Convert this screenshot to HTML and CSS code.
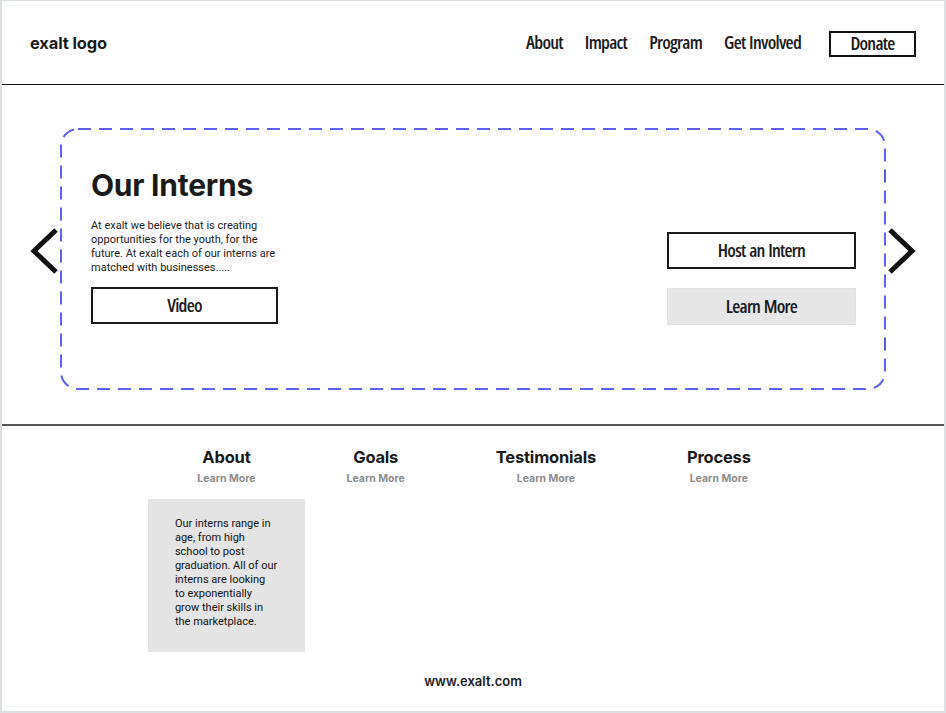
FILE: index.html
```html
<!DOCTYPE html>
<html lang="en">
<head>
<meta charset="utf-8">
<title>exalt</title>
<link rel="stylesheet" href="styles.css">
</head>
<body>
<div class="frame">
  <header class="site-header">
    <div class="logo">exalt logo</div>
    <nav class="nav">
      <a class="nav-link">About</a>
      <a class="nav-link">Impact</a>
      <a class="nav-link">Program</a>
      <a class="nav-link">Get Involved</a>
      <a class="nav-link donate">Donate</a>
    </nav>
  </header>

  <section class="hero">
    <svg class="arrow" width="28" height="46" viewBox="0 0 28 46"><polyline points="26,2 4,23 26,44" fill="none" stroke="#111" stroke-width="5"/></svg>
    <div class="card">
      <svg class="card-border" width="826" height="262" viewBox="0 0 826 262"><rect x="1" y="1" width="824" height="260" rx="17" ry="17" fill="none" stroke="#5f5ff2" stroke-width="2" stroke-dasharray="13 8"/></svg>
      <div class="card-left">
        <h1 class="title">Our Interns</h1>
        <p class="intro">At exalt we believe that is creating opportunities for the youth, for the future. At exalt each of our interns are matched with businesses.....</p>
        <a class="btn">Video</a>
      </div>
      <div class="card-right">
        <a class="btn">Host an Intern</a>
        <a class="btn btn-grey">Learn More</a>
      </div>
    </div>
    <svg class="arrow" width="28" height="46" viewBox="0 0 28 46"><polyline points="2,2 24,23 2,44" fill="none" stroke="#111" stroke-width="5"/></svg>
  </section>

  <footer class="footer">
    <div class="cols">
      <div class="col">
        <h2 class="col-title">About</h2>
        <a class="col-link">Learn More</a>
        <div class="about-box">Our interns range in<br>age, from high<br>school to post<br>graduation. All of our<br>interns are looking<br>to exponentially<br>grow their skills in<br>the marketplace.</div>
      </div>
      <div class="col">
        <h2 class="col-title">Goals</h2>
        <a class="col-link">Learn More</a>
      </div>
      <div class="col">
        <h2 class="col-title">Testimonials</h2>
        <a class="col-link">Learn More</a>
      </div>
      <div class="col">
        <h2 class="col-title">Process</h2>
        <a class="col-link">Learn More</a>
      </div>
    </div>
    <div class="site-url">www.exalt.com</div>
  </footer>
</div>
</body>
</html>
```

FILE: styles.css
```css
* { box-sizing: border-box; }
html, body { margin: 0; padding: 0; background: #fff; }
body {
  font-family: "Inter", "Noto Sans", sans-serif;
  color: #1a1a1a;
}
.frame {
  width: 946px;
  height: 713px;
  border: 2px solid #dadfdf;
  border-top-width: 1px;
  display: flex;
  flex-direction: column;
  overflow: hidden;
}
.site-header {
  height: 84px;
  flex: none;
  border-bottom: 1px solid #111;
  display: flex;
  align-items: center;
  justify-content: space-between;
  padding: 0 28px 0 28px;
}
.logo {
  font-size: 16.5px;
  font-weight: 700;
  letter-spacing: -0.15px;
}
.nav {
  display: flex;
  align-items: center;
  gap: 22px;
}
.nav-link, .btn {
  font-family: "Open Sans", sans-serif;
  font-stretch: 75%;
  font-weight: 600;
  font-size: 18.5px;
  letter-spacing: -0.75px;
  word-spacing: 1px;
  color: #1a1a1a;
}
.nav-link {
  line-height: 27px;
  padding-bottom: 3px;
}
.donate {
  width: 87px;
  height: 26px;
  border: 2px solid #111;
  display: flex;
  align-items: center;
  justify-content: center;
  margin-left: 6px;
  margin-top: 2px;
  padding-bottom: 2px;
}
.hero {
  height: 341px;
  flex: none;
  border-bottom: 2px solid #555;
  display: flex;
  align-items: flex-start;
  padding: 43px 0 0 28px;
  gap: 2px;
}
.arrow {
  margin-top: 100px;
  flex: none;
}
.card {
  position: relative;
  width: 826px;
  height: 262px;
  flex: none;
  display: flex;
  justify-content: space-between;
  align-items: flex-start;
  padding: 0 30px 0 31px;
}
.card-border {
  position: absolute;
  left: 0;
  top: 0;
  pointer-events: none;
}
.card-left {
  width: 187px;
  padding-top: 39px;
}
.title {
  margin: 0;
  font-size: 30px;
  font-weight: 700;
  line-height: 36px;
  letter-spacing: -0.25px;
  white-space: nowrap;
}
.intro {
  margin: 16px 0 12px;
  font-family: "Roboto", sans-serif;
  font-size: 11px;
  line-height: 14px;
  width: 190px;
}
.btn {
  display: flex;
  align-items: center;
  justify-content: center;
  width: 187px;
  height: 37px;
  border: 2px solid #1a1a1a;
  padding-bottom: 2px;
}
.card-right {
  width: 189px;
  margin-top: 104px;
  display: flex;
  flex-direction: column;
  gap: 19px;
}
.card-right .btn { width: 189px; }
.btn-grey {
  background: #e6e6e6;
  border: 1px solid #e2e2e2;
}
.footer {
  flex: 1;
  display: flex;
  flex-direction: column;
  align-items: center;
  padding-top: 20px;
}
.cols {
  display: flex;
  gap: 91px;
  align-items: flex-start;
  padding-left: 2px;
}
.col {
  display: flex;
  flex-direction: column;
  align-items: center;
}
.col-title {
  margin: 0;
  font-size: 16.5px;
  font-weight: 700;
  line-height: 22px;
  letter-spacing: -0.2px;
}
.col-link {
  font-size: 10.5px;
  font-weight: 700;
  color: #8c8c8c;
  line-height: 16px;
  margin-top: 3px;
}
.about-box {
  width: 157px;
  margin: 12px -49.5px 0;
  height: 153px;
  background: #e4e4e4;
  padding: 18px 10px 0 27px;
  font-family: "Roboto", sans-serif;
  font-size: 11px;
  line-height: 14px;
  color: #111;
  white-space: nowrap;
}
.site-url {
  margin-top: 21px;
  font-size: 13px;
  font-weight: 600;
}
```
